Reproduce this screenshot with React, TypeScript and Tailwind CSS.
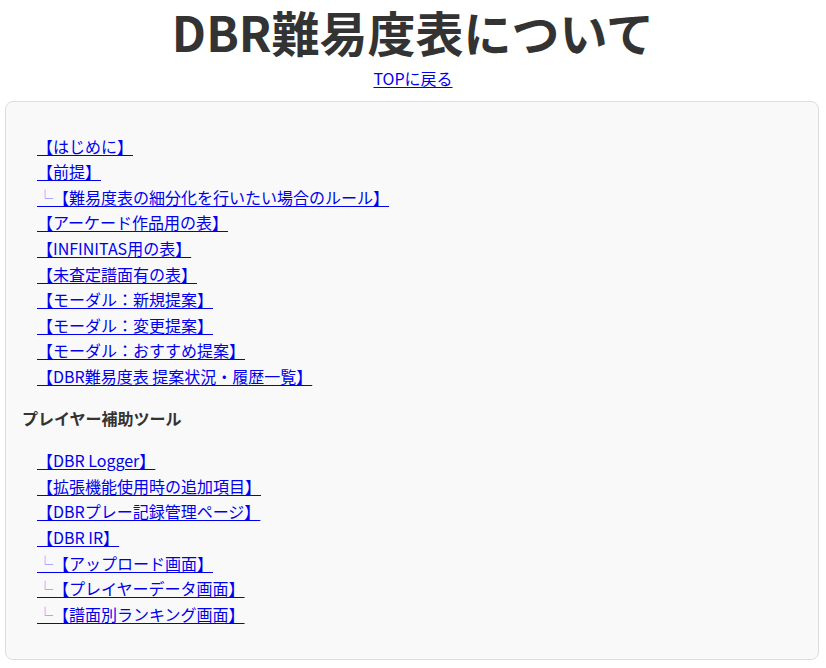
import React from "react";

const mainLinks: { label: string; sub?: boolean }[] = [
  { label: "【はじめに】" },
  { label: "【前提】" },
  { label: "【難易度表の細分化を行いたい場合のルール】", sub: true },
  { label: "【アーケード作品用の表】" },
  { label: "【INFINITAS用の表】" },
  { label: "【未査定譜面有の表】" },
  { label: "【モーダル：新規提案】" },
  { label: "【モーダル：変更提案】" },
  { label: "【モーダル：おすすめ提案】" },
  { label: "【DBR難易度表 提案状況・履歴一覧】" },
];

const toolLinks: { label: string; sub?: boolean }[] = [
  { label: "【DBR Logger】" },
  { label: "【拡張機能使用時の追加項目】" },
  { label: "【DBRプレー記録管理ページ】" },
  { label: "【DBR IR】" },
  { label: "【アップロード画面】", sub: true },
  { label: "【プレイヤーデータ画面】", sub: true },
  { label: "【譜面別ランキング画面】", sub: true },
];

function LinkList({ items }: { items: { label: string; sub?: boolean }[] }) {
  return (
    <ul className="pl-[15px] my-4">
      {items.map((item, i) => (
        <li key={i}>
          <a href="#" className="text-[#0000ee] underline underline-offset-2">
            {item.sub && <span className="text-[#9999ff]">└</span>}
            {item.label}
          </a>
        </li>
      ))}
    </ul>
  );
}

export default function App() {
  return (
    <div
      className="min-h-[668px] bg-white text-[#333] text-[16px] leading-[1.6]"
      style={{ fontFamily: '"Noto Sans CJK JP", "Noto Sans", sans-serif' }}
    >
      <h1 className="text-center text-[48px] font-bold leading-[60px] pt-px">DBR難易度表について</h1>
      <div className="text-center mt-[5px]">
        <a href="#" className="text-[#0000ee] underline underline-offset-2">
          TOPに戻る
        </a>
      </div>
      <div className="ml-[5px] mr-[7px] mt-[9px] border border-[#dddddd] rounded-lg bg-[#f9f9f9] px-4 py-4">
        <LinkList items={mainLinks} />
        <h3 className="font-bold mt-[14px] mb-[17px]">プレイヤー補助ツール</h3>
        <LinkList items={toolLinks} />
      </div>
    </div>
  );
}
